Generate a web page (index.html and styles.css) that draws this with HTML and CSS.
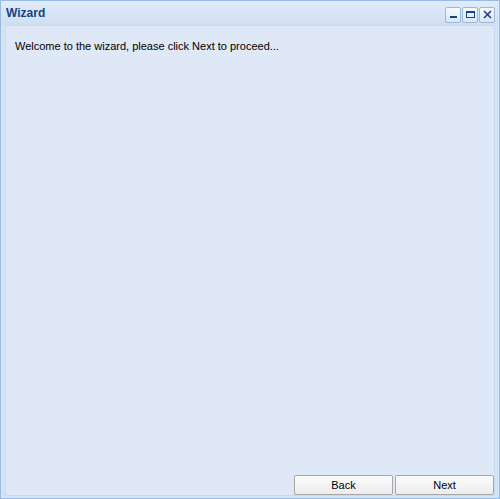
FILE: index.html
```html
<!DOCTYPE html>
<html>
<head>
<meta charset="utf-8">
<link rel="stylesheet" href="styles.css">
</head>
<body>
<div class="window">
  <div class="header">
    <span class="title">Wizard</span>
    <div class="tools">
      <div class="tool"><svg width="11" height="11" viewBox="0 0 11 11"><rect x="2" y="7" width="7" height="2" fill="#15428b"/></svg></div>
      <div class="tool"><svg width="11" height="11" viewBox="0 0 11 11"><rect x="1.5" y="2.5" width="8" height="6" fill="none" stroke="#15428b"/><rect x="1" y="2" width="9" height="2" fill="#15428b"/></svg></div>
      <div class="tool"><svg width="11" height="11" viewBox="0 0 11 11"><path d="M2 2 L9 9 M9 2 L2 9" stroke="#15428b" stroke-width="1.6"/></svg></div>
    </div>
  </div>
  <div class="frame">
    <div class="body">
      <p class="msg">Welcome to the wizard, please click Next to proceed...</p>
      <div class="footer">
        <button class="btn">Back</button>
        <button class="btn">Next</button>
      </div>
    </div>
  </div>
</div>
</body>
</html>
```
FILE: styles.css
```css
html, body { margin: 0; padding: 0; }
body { width: 500px; height: 499px; overflow: hidden; background: #fff; }
.window {
  box-sizing: border-box;
  width: 500px; height: 499px;
  border: 1px solid #99bbe8;
  background: #dfe8f6;
  display: flex; flex-direction: column;
  font-family: "Liberation Sans", Arial, sans-serif;
}
.header {
  height: 24px;
  flex: none;
  background: linear-gradient(#e2ecf9, #cfdff3);
  display: flex; align-items: center; justify-content: space-between;
  padding: 0 4px 0 5px;
}
.title { color: #15428b; font-weight: bold; font-size: 12px; }
.tools { display: flex; gap: 1px; margin-top: 3px; }
.tool {
  width: 14px; height: 14px;
  border: 1px solid #9fb8da;
  border-radius: 2px;
  background: linear-gradient(#f5f9fe, #dbe6f5);
  display: flex; align-items: center; justify-content: center;
}
.frame {
  flex: 1;
  display: flex; flex-direction: column;
  padding: 0 4px 2px 4px;
  background: #d7e3f4;
}
.body {
  flex: 1;
  border: 1px solid #c9d9ef;
  background: #dfe8f6;
  padding: 0 0 0 9px;
  display: flex; flex-direction: column;
}
.msg { margin: 14px 0 0 0; font-size: 11px; color: #000; flex: 1; }
.footer {
  display: flex; justify-content: flex-end; gap: 2px;
}
.btn {
  width: 99px; height: 20px;
  margin: 0;
  border: 1px solid #a7a7a7;
  border-radius: 2px;
  background: linear-gradient(#fbfbfb, #ececec);
  font-family: "Liberation Sans", Arial, sans-serif;
  font-size: 11px; color: #000;
  padding: 0;
}
```
